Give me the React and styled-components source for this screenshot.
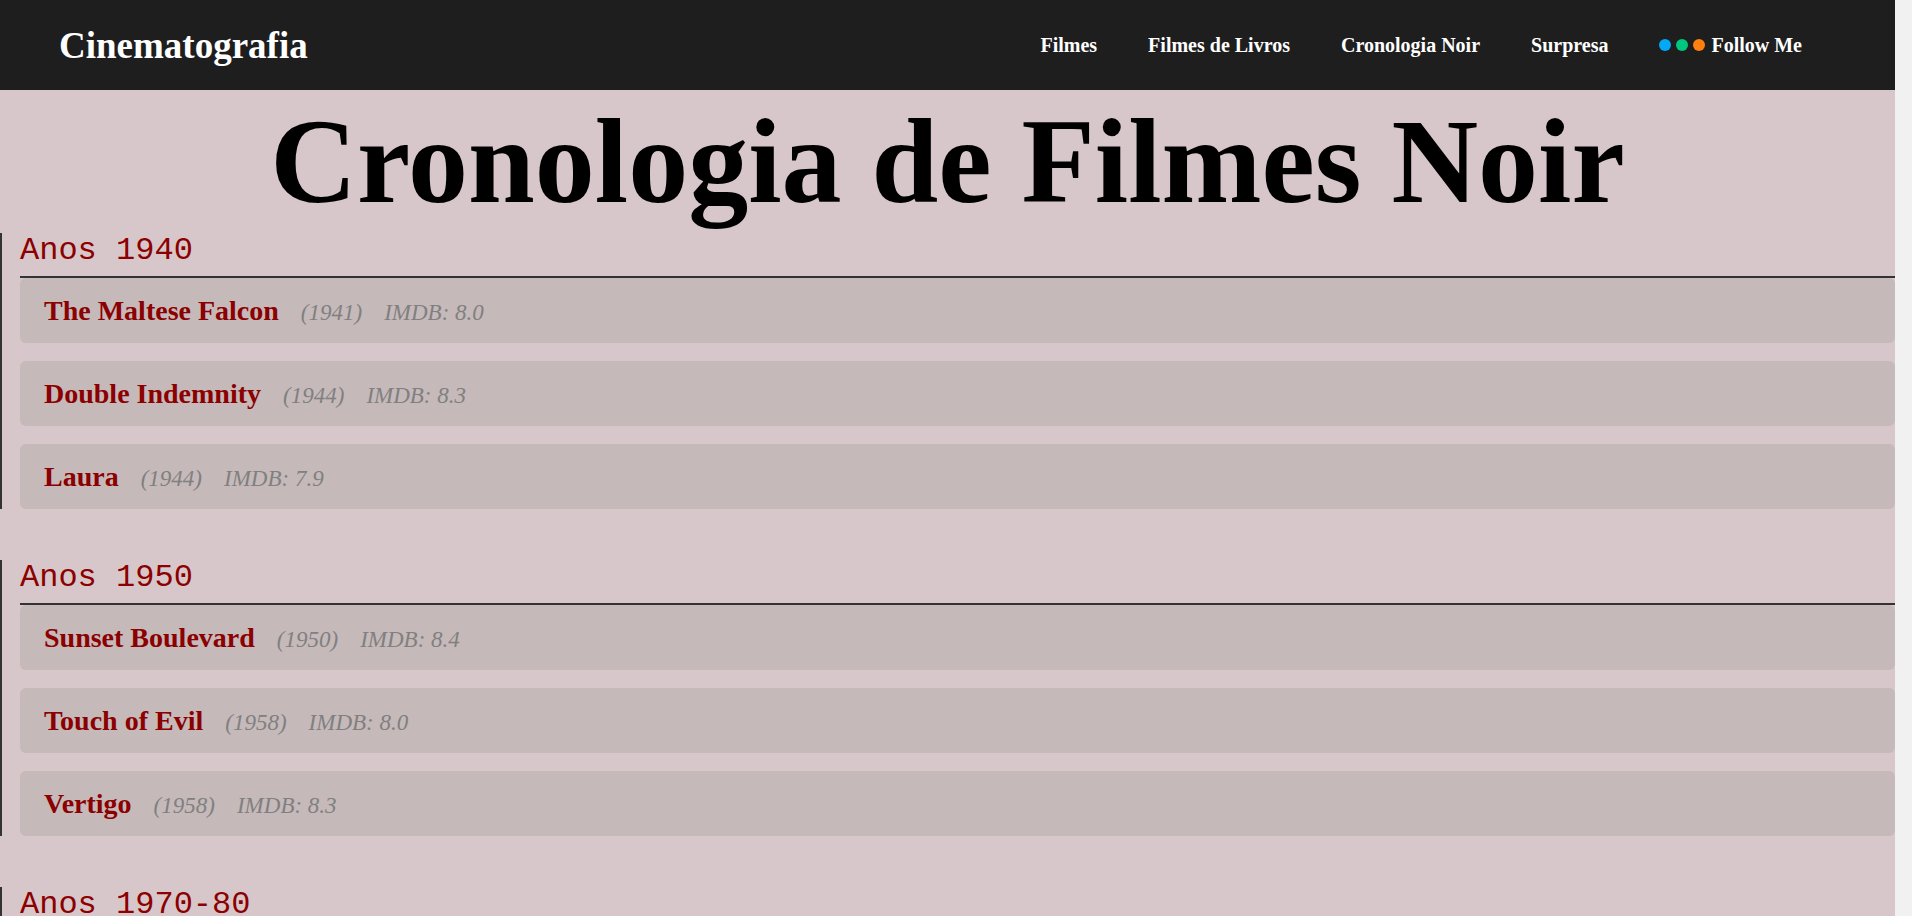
import styled, { createGlobalStyle } from 'styled-components';

const decades = [
  {
    label: 'Anos 1940',
    films: [
      { title: 'The Maltese Falcon', year: 1941, imdb: '8.0' },
      { title: 'Double Indemnity', year: 1944, imdb: '8.3' },
      { title: 'Laura', year: 1944, imdb: '7.9' },
    ],
  },
  {
    label: 'Anos 1950',
    films: [
      { title: 'Sunset Boulevard', year: 1950, imdb: '8.4' },
      { title: 'Touch of Evil', year: 1958, imdb: '8.0' },
      { title: 'Vertigo', year: 1958, imdb: '8.3' },
    ],
  },
  {
    label: 'Anos 1970-80',
    films: [
      { title: 'Chinatown', year: 1974, imdb: '8.1' },
      { title: 'Taxi Driver', year: 1976, imdb: '8.2' },
      { title: 'Blade Runner', year: 1982, imdb: '8.1' },
    ],
  },
  {
    label: 'Anos 1990',
    films: [
      { title: 'Se7en', year: 1995, imdb: '8.6' },
      { title: 'Fargo', year: 1996, imdb: '8.1' },
      { title: 'L.A. Confidential', year: 1997, imdb: '8.2' },
    ],
  },
  {
    label: 'Anos 2000',
    films: [
      { title: 'Memento', year: 2000, imdb: '8.4' },
      { title: 'Mulholland Drive', year: 2001, imdb: '7.9' },
      { title: 'Sin City', year: 2005, imdb: '8.0' },
    ],
  },
  {
    label: 'Anos 2010',
    films: [
      { title: 'Drive', year: 2011, imdb: '7.8' },
      { title: 'Gone Girl', year: 2014, imdb: '8.1' },
      { title: 'Nightcrawler', year: 2014, imdb: '7.8' },
    ],
  },
  {
    label: 'Anos 2020',
    films: [
      { title: 'Nightmare Alley', year: 2021, imdb: '7.0' },
      { title: 'The Batman', year: 2022, imdb: '7.8' },
      { title: 'Killers of the Flower Moon', year: 2023, imdb: '7.6' },
    ],
  },
];

const links = ['Filmes', 'Filmes de Livros', 'Cronologia Noir', 'Surpresa'];

const App = () => {
  return (
    <>
      <GlobalStyle />
      <SHeader>
        <SBrand href='#'>Cinematografia</SBrand>
        <SNav>
          {links.map((link) => (
            <SNavLink key={link} href='#'>
              {link}
            </SNavLink>
          ))}
          <SNavLink href='#'>
            <SDot $color='#03a9f4' />
            <SDot $color='#00c67f' />
            <SDot $color='#ff7f0f' $last />
            Follow Me
          </SNavLink>
        </SNav>
      </SHeader>

      <SMain>
        <SPageTitle>Cronologia de Filmes Noir</SPageTitle>
        {decades.map(({ label, films }) => (
          <SDecade key={label}>
            <SDecadeTitle>{label}</SDecadeTitle>
            <SFilmList>
              {films.map(({ title, year, imdb }) => (
                <SFilmCard key={title}>
                  <SFilmTitle>{title}</SFilmTitle>
                  <SMeta>({year})</SMeta>
                  <SMeta>IMDB: {imdb}</SMeta>
                </SFilmCard>
              ))}
            </SFilmList>
          </SDecade>
        ))}
      </SMain>
    </>
  );
};

// the reference keeps a 17px scrollbar gutter on the right
const GlobalStyle = createGlobalStyle`
  html {
    background-color: #f1f1f1;
  }

  body {
    margin: 0 17px 0 0;
    background-color: #d8c7ca;
    font-family: "Liberation Serif", "Times New Roman", serif;
  }
`;

const SHeader = styled.header`
  display: flex;
  align-items: center;
  justify-content: space-between;

  height: 90px;
  padding: 0 93px 0 59px;
  box-sizing: border-box;

  background-color: #1e1e1e;
`;

const SBrand = styled.a`
  color: #fff;
  font-size: 37px;
  font-weight: 700;
  text-decoration: none;
`;

const SNav = styled.nav`
  display: flex;
  align-items: center;
  gap: 51px;
`;

const SNavLink = styled.a`
  display: flex;
  align-items: center;

  color: #fff;
  font-size: 20px;
  font-weight: 700;
  text-decoration: none;
`;

const SDot = styled.span`
  width: 12px;
  height: 12px;
  margin-right: ${({ $last }) => ($last ? '6px' : '5px')};

  background-color: ${({ $color }) => $color};
  border-radius: 50%;
`;

const SMain = styled.main`
  padding-bottom: 150px;
`;

const SPageTitle = styled.h1`
  margin: 3px 0 2px;

  color: #000;
  font-size: 120px;
  font-weight: 700;
  line-height: normal;
  text-align: center;
`;

const SDecade = styled.section`
  margin-bottom: 51px;
  padding-left: 18px;

  border-left: 2px solid #333;
`;

const SDecadeTitle = styled.h2`
  margin: 0;
  padding-bottom: 7px;

  color: #8b0000;
  font-family: "Liberation Mono", "Courier New", monospace;
  font-size: 32px;
  font-weight: 400;
  line-height: 36px;

  border-bottom: 2px solid #333;
`;

const SFilmList = styled.ul`
  display: flex;
  flex-direction: column;
  gap: 18px;

  margin: 0;
  padding: 0;
  list-style: none;
`;

const SFilmCard = styled.li`
  display: flex;
  align-items: baseline;

  height: 65px;
  padding: 17px 24px 0;
  box-sizing: border-box;

  background-color: #c6b9ba;
  border-radius: 6px;
`;

const SFilmTitle = styled.strong`
  color: #8b0000;
  font-size: 28px;
  font-weight: 700;
`;

const SMeta = styled.span`
  margin-left: 22px;

  color: #808080;
  font-size: 23px;
  font-style: italic;
`;

export default App;
